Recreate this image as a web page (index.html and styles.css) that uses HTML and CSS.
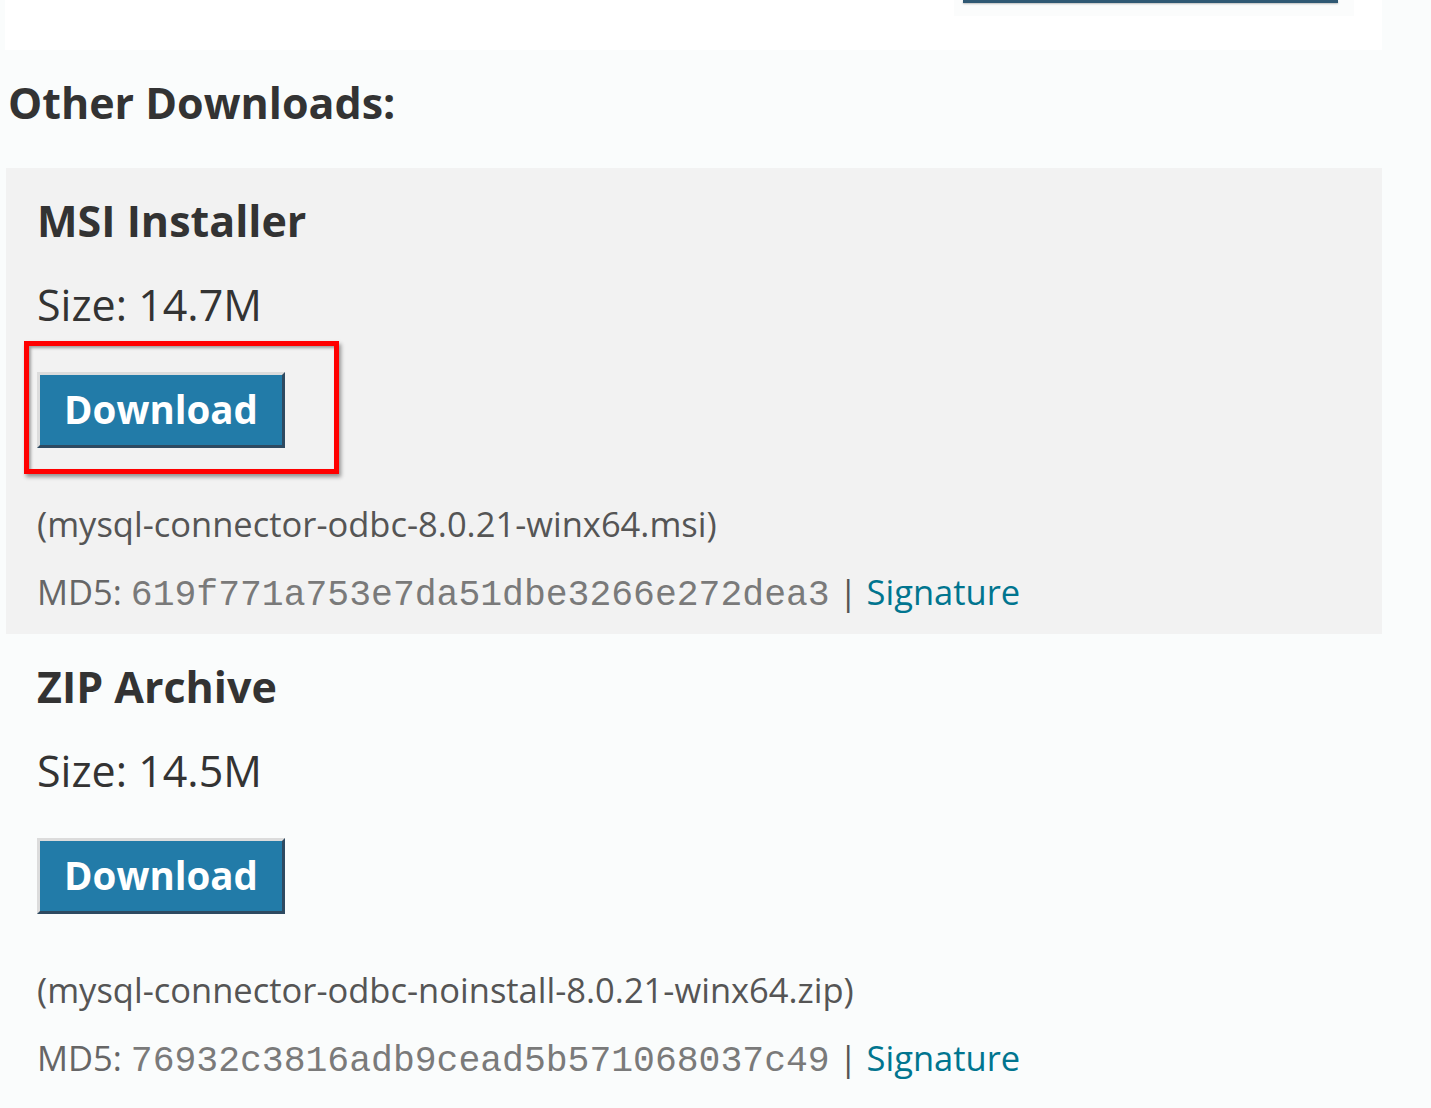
FILE: index.html
```html
<!DOCTYPE html>
<html>
<head>
    <title>Other Downloads</title>
    <link rel="stylesheet" href="styles.css">
</head>
<body>
    <div class="top-box">
        <div class="top-panel">
            <div class="top-button"></div>
        </div>
    </div>

    <h2 class="other-title">Other Downloads:</h2>

    <div class="download-item shaded">
        <h3 class="item-title">MSI Installer</h3>
        <p class="item-size">Size: 14.7M</p>
        <div class="button-row">
            <span class="highlight">
                <a class="download-button" href="#">Download</a>
            </span>
        </div>
        <p class="file-name">(mysql-connector-odbc-8.0.21-winx64.msi)</p>
        <p class="md5">MD5: <code>619f771a753e7da51dbe3266e272dea3</code> <span class="sep">|</span> <a href="#">Signature</a></p>
    </div>

    <div class="download-item">
        <h3 class="item-title">ZIP Archive</h3>
        <p class="item-size">Size: 14.5M</p>
        <div class="button-row">
            <a class="download-button" href="#">Download</a>
        </div>
        <p class="file-name">(mysql-connector-odbc-noinstall-8.0.21-winx64.zip)</p>
        <p class="md5">MD5: <code>76932c3816adb9cead5b571068037c49</code> <span class="sep">|</span> <a href="#">Signature</a></p>
    </div>
</body>
</html>
```

FILE: styles.css
```css
body {
    margin: 0;
    font-family: "Open Sans", "Noto Sans", sans-serif;
    background-color: #fafcfc;
    color: #333;
    width: 1431px;
    height: 1108px;
    overflow: hidden;
}

.top-box {
    margin-left: 5px;
    width: 1377px;
    height: 50px;
    background-color: #fff;
    position: relative;
}

.top-panel {
    position: absolute;
    left: 949px;
    top: 0;
    width: 400px;
    height: 16px;
    background-color: #fbfcfc;
}

.top-button {
    margin-left: 9px;
    width: 375px;
    height: 3px;
    background-color: #2f5873;
    box-shadow: 0 1px 2px rgba(0, 0, 0, 0.25);
}

.other-title {
    margin: 0;
    padding: 26px 0 0 8px;
    height: 118px;
    box-sizing: border-box;
    font-size: 43px;
    font-weight: bold;
    line-height: 54px;
}

.download-item {
    margin-left: 6px;
    width: 1376px;
    height: 466px;
    padding: 25px 0 0 31px;
    box-sizing: border-box;
}

.shaded {
    background-color: #f2f2f2;
}

.item-title {
    margin: 0;
    font-size: 43px;
    font-weight: bold;
    line-height: 56px;
}

.item-size {
    margin: 27px 0 0 0;
    font-size: 43px;
    line-height: 58px;
    color: #333;
}

.button-row {
    margin-top: 38px;
    height: 76px;
}

.highlight {
    display: inline-block;
    position: relative;
}

.highlight::before {
    content: "";
    position: absolute;
    left: -13px;
    top: -31px;
    width: 315px;
    height: 133px;
    box-sizing: border-box;
    border: 5px solid #ff0000;
    box-shadow: 2px 3px 4px rgba(0, 0, 0, 0.4), inset 2px 2px 3px rgba(0, 0, 0, 0.35);
}

.download-button {
    display: inline-block;
    width: 248px;
    height: 76px;
    box-sizing: border-box;
    border-top: 3px solid #dcdcdc;
    border-left: 3px solid #dcdcdc;
    border-right: 3px solid #2e4a61;
    border-bottom: 3px solid #2e4a61;
    background-color: #227ba8;
    color: #fff;
    font-size: 38.5px;
    font-weight: bold;
    text-align: center;
    line-height: 68px;
    text-decoration: none;
}

.file-name {
    margin: 56px 0 0 0;
    font-size: 34.5px;
    line-height: 40px;
    color: #555;
}

.md5 {
    margin: 26px 0 0 0;
    font-size: 34.5px;
    line-height: 44px;
    color: #666;
}

.md5 code {
    font-family: "Liberation Mono", "DejaVu Sans Mono", monospace;
    font-size: 36.4px;
    color: #7a7a7a;
}

.sep {
    color: #555;
}

.md5 a {
    color: #00758f;
    text-decoration: none;
}
```
